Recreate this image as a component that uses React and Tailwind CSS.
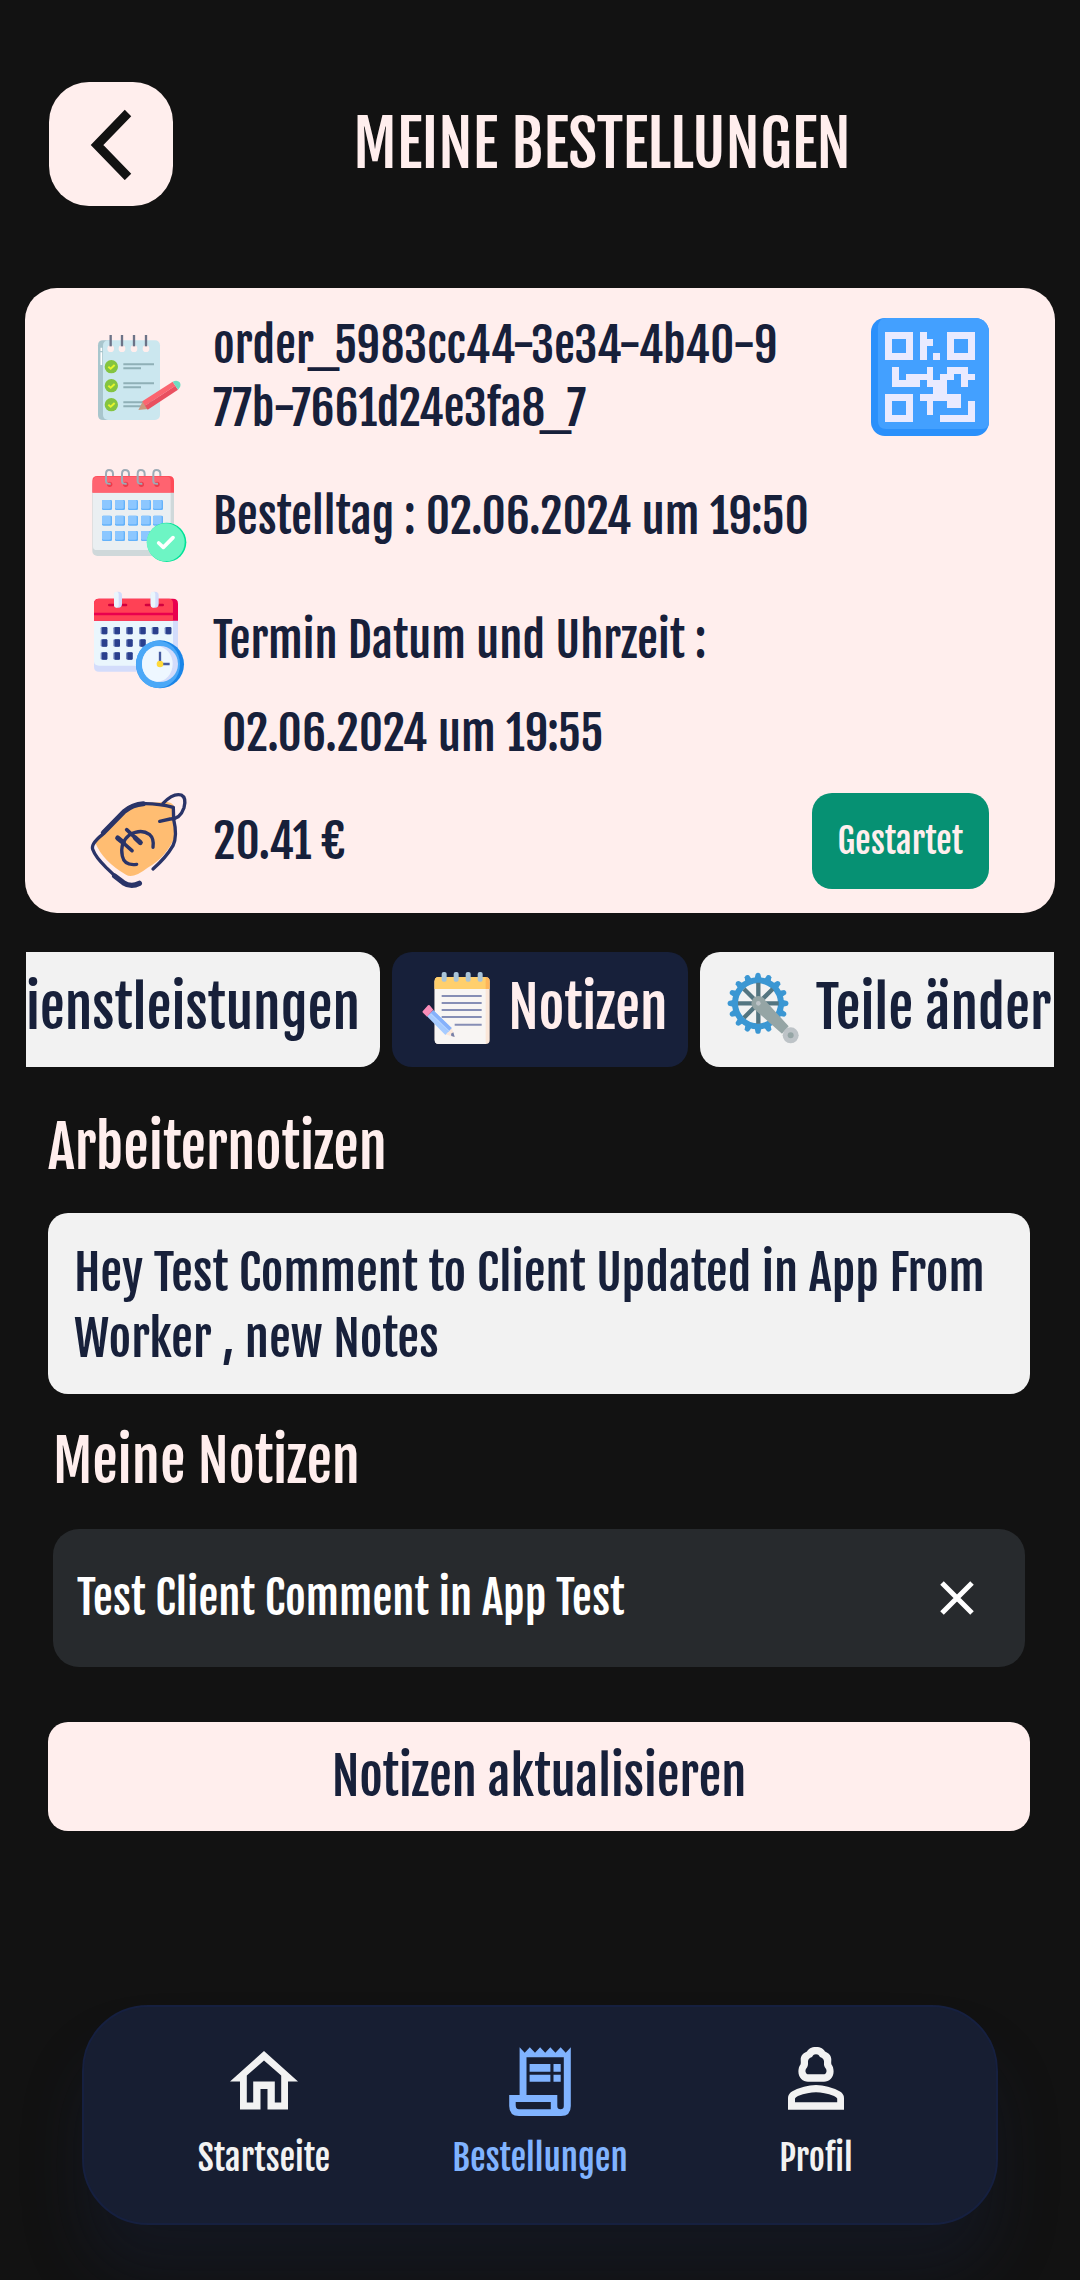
import React, { useLayoutEffect, useRef, useState } from "react";

function ChecklistIcon() {
  const rows = [137, 194, 251];
  return (
    <svg className="size-24 shrink-0 overflow-visible" viewBox="30 24 288 288" aria-hidden="true">
      <path d="M66 58H90V297H66Q51 297 51 282V73Q51 58 66 58Z" fill="#a8c6cd" />
      <rect x="66" y="58" width="171" height="239" rx="15" fill="#cbe7ef" />
      <path d="M61 80v10M61 94v38" stroke="#fff" strokeWidth="5" />
      {[89, 123, 159, 195].map((x) => (
        <g key={x}>
          <circle cx={x} cy="83" r="10" fill="#ffeeed" />
          <path d={`M${x} 42V76`} stroke="#6c7387" strokeWidth="7" />
        </g>
      ))}
      {rows.map((y) => (
        <g key={y}>
          <circle cx="91" cy={y} r="20" fill="#84c441" />
          <path d={`M82 ${y}l7 6l12 -11`} stroke="#e6f52d" strokeWidth="6" fill="none" />
          <path d={`M127 ${y - 7}H219M127 ${y + 5}H180`} stroke="#8fb0b7" strokeWidth="6" />
        </g>
      ))}
      <path d="M172 267L186 240L202 264Z" fill="#c9997f" />
      <path d="M184 241L275 182L283 194L192 254Z" fill="#fb6570" />
      <path d="M192 254L283 194L291 206L200 266Z" fill="#e95060" />
      <path d="M275 182Q288 175 296 184Q303 195 291 206Z" fill="#6fdcc2" />
    </svg>
  );
}

function CalendarCheckIcon() {
  return (
    <svg className="size-24 shrink-0 overflow-visible" viewBox="30 444 288 288" aria-hidden="true">
      <rect x="34" y="480" width="245" height="228" rx="15" fill="#cfd8da" />
      <path d="M36 510H269V690H48Q36 690 36 680Z" fill="#eaeff2" />
      <path d="M34 518V483Q34 468 49 468H264Q279 468 279 483V518Z" fill="#ff4a57" />
      <path d="M36 516V483Q36 470 49 470H258Q269 470 269 483V516Z" fill="#ff6370" />
      {[84, 132, 179, 226].map((x) => (
        <g key={x}>
          <circle cx={x + 2} cy="493" r="8" fill="#ec3b4b" />
          <path d={`M${x + 12} 468V462Q${x + 12} 450 ${x} 450Q${x - 9} 450 ${x - 9} 462V484Q${x - 9} 493 ${x + 5} 491`} stroke="#9dabb6" strokeWidth="6" fill="none" />
        </g>
      ))}
      {[540, 587, 633].map((y) =>
        [63, 102, 141, 180, 216].map((x) => (
          <g key={`${x}-${y}`}>
            <rect x={x} y={y} width="30" height="30" rx="4" fill="#64b2fa" />
            <rect x={x} y={y} width="26" height="26" rx="4" fill="#8cc7ff" />
          </g>
        ))
      )}
      <circle cx="257" cy="667" r="59" fill="#00e297" />
      <circle cx="254" cy="667" r="57" fill="#6df5c4" />
      <path d="M233 669L247 682L276 653" stroke="#fff" strokeWidth="11" strokeLinecap="round" strokeLinejoin="round" fill="none" />
    </svg>
  );
}

function CalendarClockIcon() {
  return (
    <svg className="size-24 shrink-0 overflow-visible" viewBox="30 814 288 288" aria-hidden="true">
      <path d="M39 890H291V1053H54Q39 1053 39 1038Z" fill="#d3dcfb" />
      <path d="M39 890H276V1035H54Q39 1035 39 1022Z" fill="#eaf6fd" />
      <path d="M39 900V849Q39 834 54 834H276Q291 834 291 849V900Z" fill="#e9004e" />
      <path d="M39 900V849Q39 834 54 834H264Q276 834 276 849V900Z" fill="#ff4155" />
      <path d="M39 880H276" stroke="#e9004e" strokeWidth="8" />
      {[110, 220].map((x) => (
        <g key={x}>
          <path d={`M${x - 25} 853H${x + 25}`} stroke="#d2003f" strokeWidth="8" strokeLinecap="round" />
          <rect x={x - 11} y="813" width="24" height="48" rx="11" fill="#d3dcfb" />
          <rect x={x - 11} y="813" width="14" height="48" rx="7" fill="#eaf6fd" />
        </g>
      ))}
      {[930, 967, 1006].map((y) =>
        [69, 107, 145, 184, 222, 261].map((x) =>
          y > 930 && x > 190 ? null : (
            <g key={`${x}-${y}`}>
              <rect x={x - 10} y={y - 11} width="20" height="22" rx="4" fill="#7287bf" />
              <rect x={x - 6} y={y - 11} width="16" height="22" rx="3" fill="#2a3f8d" />
            </g>
          )
        )
      )}
      <circle cx="237" cy="1031" r="72" fill="#1a85e8" />
      <ellipse cx="231" cy="1031" rx="66" ry="71" fill="#4ba8f7" />
      <circle cx="237" cy="1030" r="54" fill="#d3dcfb" />
      <ellipse cx="229" cy="1030" rx="46" ry="53" fill="#eef7ff" />
      <path d="M237 993V1030H266" stroke="#455a9f" strokeWidth="7" fill="none" />
      <circle cx="237" cy="1030" r="10" fill="#ffd93a" />
    </svg>
  );
}

function PriceTagIcon() {
  return (
    <svg className="size-24 shrink-0 overflow-visible" viewBox="15 21 288 288" fill="none" aria-hidden="true">
      <path d="M28 170L120 64Q140 50 180 50L245 48Q268 52 267 75L268 150Q240 215 185 245Q140 280 120 266Q50 225 28 170Z" fill="#ffbd72" />
      <path d="M52 140L115 76Q140 55 172 53Q215 52 262 64L263 100Q275 150 261 179Q240 215 201 249" stroke="#2a3468" strokeWidth="10" strokeLinecap="round" strokeLinejoin="round" />
      <path d="M52 140L115 76Q140 55 172 53" stroke="#2a3468" strokeWidth="15" strokeLinecap="round" />
      <path d="M50 145Q12 175 21 192Q28 212 60 244L104 286" stroke="#2a3468" strokeWidth="10" strokeLinecap="round" />
      <path d="M86 270L112 290Q135 305 160 292" stroke="#2a3468" strokeWidth="16" strokeLinecap="round" />
      <path d="M231 52Q262 20 286 27Q302 35 294 65Q282 100 252 99L221 106" stroke="#2a3468" strokeWidth="10" strokeLinecap="round" />
      <path d="M152 235Q115 240 109 210Q101 170 130 147Q165 127 190 145Q205 158 201 184" stroke="#2a3468" strokeWidth="10" strokeLinecap="round" />
      <path d="M95 156L138 194M122 131L163 170" stroke="#2a3468" strokeWidth="11" strokeLinecap="round" />
      <path d="M95 156L112 170M148 156L163 170" stroke="#2a3468" strokeWidth="15" strokeLinecap="round" />
    </svg>
  );
}

function QrIcon() {
  return (
    <svg className="block size-[118px]" viewBox="0 0 17 17" aria-hidden="true">
      <rect width="17" height="17" rx="2" fill="#2a90fb" />
      <path d="M2.2 0H15A2 2 0 0 1 17 2V15Q17 16 16 16H2.2Q1 16 1 14.800V1.200Q1.200 0 2.200 0Z" fill="#43a0ff" />
      <g fill="#e9eaff" fillRule="evenodd" shapeRendering="crispEdges">
        <path d="M2 2H6V6H2ZM3 3V5H5V3Z" />
        <path d="M11 2H15V6H11ZM12 3V5H14V3Z" />
        <path d="M2 11H6V15H2ZM3 12V14H5V12Z" />
        <path d="M7 2H8V3H9V4H8V6H7Z" />
        <path d="M9 5H10V6H9Z" />
        <path d="M3 7H4V9H5V8H8V7H9V9H10V8H11V7H14V8H15V9H14V10H13V8H12V9H11V11H13V13H11V12H9V14H8V12H7V11H9V10H8V9H7V10H3Z" />
        <path d="M14 12H15V15H10V14H14Z" />
      </g>
    </svg>
  );
}

function NotesIcon() {
  return (
    <svg className="size-18 shrink-0 overflow-visible" viewBox="58 72 216 216" aria-hidden="true">
      <rect x="102" y="88" width="165" height="200" rx="12" fill="#fbe7d9" />
      <path d="M102 100H255V288H114Q102 288 102 276Z" fill="#f8f5f3" />
      <path d="M102 123V99Q102 87 114 87H255Q267 87 267 99V123Z" fill="#ffb65a" />
      <path d="M102 123V99Q102 87 114 87H255V123Z" fill="#ffcf6c" />
      {[130, 166, 202, 238].map((x) => (
        <rect key={x} x={x - 7} y="72" width="15" height="29" rx="6" fill="#a9c4d8" />
      ))}
      <path d="M123 144H243M123 165H243M123 186H243M123 207H243M162 230H243" stroke="#868eb5" strokeWidth="6" />
      <path d="M133 259L153 239L162 267Z" fill="#fbe7d9" />
      <path d="M151 257L158 253L162 267L152 264Z" fill="#7780a8" />
      <path d="M79 205L98 187L153 240L134 261Z" fill="#a6cbff" />
      <path d="M88 196L98 187L153 240L143 251Z" fill="#86b1fb" />
      <path d="M90 197L145 250" stroke="#b5d4ff" strokeWidth="4" />
      <path d="M66 190L82 172Q84 170 87 172L98 185L79 206L67 194Q64 192 66 190Z" fill="#f98db9" />
    </svg>
  );
}

function CrankIcon() {
  const teeth = [0, 1, 2, 3, 4, 5, 6, 7, 8, 9, 10, 11, 12, 13, 14, 15];
  return (
    <svg className="size-18 shrink-0 overflow-visible" viewBox="982 73 216 216" aria-hidden="true">
      <circle cx="1072" cy="167" r="69" fill="none" stroke="#3b97d3" strokeWidth="18" />
      {teeth.map((i) => (
        <path key={i} d="M1062 92L1065 79Q1072 72 1079 79L1082 92Z" fill="#3b97d3" transform={`rotate(${i * 22.5} 1072 167)`} />
      ))}
      <path d="M1073 105V228M1012 167H1134M1030 124L1116 210M1030 210L1116 124" stroke="#547580" strokeWidth="13" />
      <path d="M1052 167Q1055 145 1074 145Q1090 146 1095 160L1164 236L1144 258L1060 184Q1052 177 1052 167Z" fill="#95a5a5" />
      <circle cx="1073" cy="167" r="7" fill="#bdc3c7" />
      <circle cx="1170" cy="263" r="24" fill="#bdc3c7" />
      <circle cx="1170" cy="263" r="9" fill="#95a5a5" />
    </svg>
  );
}

function HomeIcon() {
  return (
    <svg className="size-18" viewBox="0 0 72 72" fill="currentColor" fillRule="evenodd" aria-hidden="true">
      <path d="M36 7L70 37.500H60V65.500H39.500V45H32.500V65.500H12V37.500H2ZM36 16.500L18.800 31.500V58.500H25.200V37.500H46.800V58.500H53.200V31.500Z" />
    </svg>
  );
}

function ReceiptIcon() {
  return (
    <svg className="size-18" viewBox="0 0 72 72" fill="currentColor" fillRule="evenodd" aria-hidden="true">
      <path d="M15.600 3.300L20.700 8.700L25.800 3.300L31 8.700L36.100 3.300L41.200 8.700L46.300 3.300L51.400 8.700L56.600 3.300L61.700 8.700L66.800 3.300V62Q66.800 72 57 72H15Q5.200 72 5.200 62V51H15.600ZM22.500 13.300V51H53.300V62Q53.300 65.300 56.500 65.300Q59.800 65.300 59.800 62V13.300ZM11.700 58V61Q11.700 65.300 15 65.300H46.800V58Z" />
      <path d="M25.600 20H46.400V27.700H25.600ZM49.500 20H56.700V27.700H49.500ZM25.600 30.700H46.400V37.700H25.600ZM49.500 30.700H56.700V37.700H49.500Z" />
    </svg>
  );
}

function ProfileIcon() {
  return (
    <svg className="size-18" viewBox="0 0 72 72" fill="currentColor" fillRule="evenodd" aria-hidden="true">
      <path d="M36 3C41 3 43.500 5 45 7.500C49 9 51.300 12 51.300 15.500C51.300 17.500 51 19 51.500 20.500C53 22.500 53.600 25 53.600 27.500C53.600 34 49 37.700 44 37.700H28C23 37.700 18.400 34 18.400 27.500C18.400 25 19 22.500 20.500 20.500C21 19 20.700 17.500 20.700 15.500C20.700 12 23 9 27 7.500C28.500 5 31 3 36 3ZM36 10.300C33.500 10.300 33 11.500 32 13C29.500 14 28 15 28 17.500C28 19.500 28.300 21.500 27 23.500C25.500 25 25.300 26.500 25.600 28C26 29.700 27 30.300 28.500 30.300H43.500C45 30.300 46 29.700 46.400 28C46.700 26.500 46.500 25 45 23.500C43.700 21.500 44 19.500 44 17.500C44 15 42.500 14 40 13C39 11.500 38.500 10.300 36 10.300Z" />
      <path d="M8 65.700V54Q8 50 12 47.500Q24 41 36 41T60 47.500Q64 50 64 54V65.700ZM15 58.300H57.200V54.500Q56.500 53 54 52Q44 48.300 36 48.300T18 52Q15.500 53 15 54.500Z" />
    </svg>
  );
}

const tabs = [
  { label: "Dienstleistungen", Icon: ChecklistIcon },
  { label: "Notizen", Icon: NotesIcon },
  { label: "Teile ändern", Icon: CrankIcon },
];

const navItems = [
  { label: "Startseite", Icon: HomeIcon },
  { label: "Bestellungen", Icon: ReceiptIcon },
  { label: "Profil", Icon: ProfileIcon },
];

export default function App() {
  const tabBar = useRef(null);
  const activeTab = useRef(null);
  const [tab, setTab] = useState("Notizen");
  const [note, setNote] = useState("Test Client Comment in App Test");

  useLayoutEffect(() => {
    const bar = tabBar.current;
    const item = activeTab.current;
    bar.scrollLeft = item.offsetLeft + item.offsetWidth / 2 - bar.clientWidth / 2;
  }, [tab]);

  return (
    <div className="flex min-h-screen flex-col bg-[#121212] font-['Fjalla_One','Roboto_Condensed',sans-serif] text-[#17203a]">
      <header className="flex items-center px-[49px] py-[82px]">
        <button type="button" aria-label="Zurück" className="flex size-[124px] shrink-0 items-center justify-center rounded-[40px] bg-[#ffeeed]">
          <svg className="size-[72px]" viewBox="0 0 72 72" fill="none" stroke="#121212" strokeWidth="9" aria-hidden="true">
            <path d="M53 5L22 37L53 69" />
          </svg>
        </button>
        <h1 className="flex-1 text-center text-[63px] leading-[80px] text-[#ffeeed]">MEINE BESTELLUNGEN</h1>
      </header>

      <main className="flex flex-col">
        <section className="mx-[25px] rounded-[32px] bg-[#ffeeed] px-[66px] pt-[26px] pb-6 text-[47px] leading-[63px]">
          <div className="flex items-center gap-[26px]">
            <ChecklistIcon />
            <p className="w-0 flex-1 break-all">
              <span className="block max-w-[576px]">order_5983cc44-3e34-4b40-977b-7661d24e3fa8_7</span>
            </p>
            <button type="button" aria-label="QR-Code anzeigen">
              <QrIcon />
            </button>
          </div>
          <div className="mt-7 flex items-center gap-[26px]">
            <CalendarCheckIcon />
            <p>Bestelltag : 02.06.2024 um 19:50</p>
          </div>
          <div className="mt-7 flex items-center gap-[26px]">
            <CalendarClockIcon />
            <p>Termin Datum und Uhrzeit :</p>
          </div>
          <p className="mt-[14px] ml-[131px]">02.06.2024 um 19:55</p>
          <div className="mt-7 flex items-center gap-[26px]">
            <PriceTagIcon />
            <p className="flex-1">20.41 €</p>
            <button type="button" className="h-24 rounded-[20px] bg-[#069173] px-[26px] text-[35px] text-[#ffeeed]">
              Gestartet
            </button>
          </div>
        </section>

        <div ref={tabBar} role="tablist" className="relative mx-[26px] mt-[39px] flex gap-3 overflow-x-auto [scrollbar-width:none]">
          {tabs.map(({ label, Icon }) => (
            <button
              key={label}
              ref={label === tab ? activeTab : null}
              type="button"
              role="tab"
              aria-selected={label === tab}
              onClick={() => setTab(label)}
              className={
                "flex h-[115px] shrink-0 items-center gap-4 rounded-[20px] pr-5 pb-1 pl-7 text-[56px] leading-[72px] whitespace-nowrap " +
                (label === tab ? "bg-[#17203a] text-[#ffeeed]" : "bg-[#f2f2f2] text-[#17203a]")
              }
            >
              <Icon />
              {label}
            </button>
          ))}
        </div>

        <div className="flex flex-col pr-[50px] pl-12">
          <h2 className="mt-11 text-[57px] leading-[72px] text-[#ffeeed]">Arbeiternotizen</h2>
          <p className="mt-[30px] rounded-[20px] bg-[#f2f2f2] pt-[27px] pr-6 pb-[22px] pl-[26px] text-[49px] leading-[66px]">
            Hey Test Comment to Client Updated in App From Worker , new Notes
          </p>

          <label htmlFor="note" className="mx-[5px] mt-[31px] text-[57px] leading-[72px] text-[#ffeeed]">
            Meine Notizen
          </label>
          <div className="mx-[5px] mt-8 flex h-[138px] items-center rounded-[26px] bg-[#272a2d] pr-10 pl-6">
            <input
              id="note"
              value={note}
              onChange={(e) => setNote(e.target.value)}
              className="w-0 flex-1 bg-transparent text-[45px] leading-[60px] text-white outline-none"
            />
            <button type="button" aria-label="Löschen" onClick={() => setNote("")} className="p-2">
              <svg className="size-10" viewBox="0 0 40 40" stroke="#fff" strokeWidth="5" aria-hidden="true">
                <path d="M5 5L35 35M35 5L5 35" />
              </svg>
            </button>
          </div>
          <button type="button" className="mt-[55px] h-[109px] rounded-[20px] bg-[#ffeeed] text-[51px] leading-[66px]">
            Notizen aktualisieren
          </button>
        </div>
      </main>

      <nav className="mx-[82px] mt-auto mb-[55px] grid h-[220px] grid-cols-3 rounded-[66px] border-2 border-[#162040] bg-[#171e32] px-[42px] pt-[37px] text-[35px] leading-[44px] shadow-[0_50px_60px_rgba(22,32,64,0.3)]">
        {navItems.map(({ label, Icon }) => (
          <a
            key={label}
            href={"#" + label.toLowerCase()}
            aria-current={label === "Bestellungen" ? "page" : undefined}
            className={"flex flex-col items-center gap-5 " + (label === "Bestellungen" ? "text-[#80b3ff]" : "text-[#f2f2f2]")}
          >
            <Icon />
            {label}
          </a>
        ))}
      </nav>
    </div>
  );
}
